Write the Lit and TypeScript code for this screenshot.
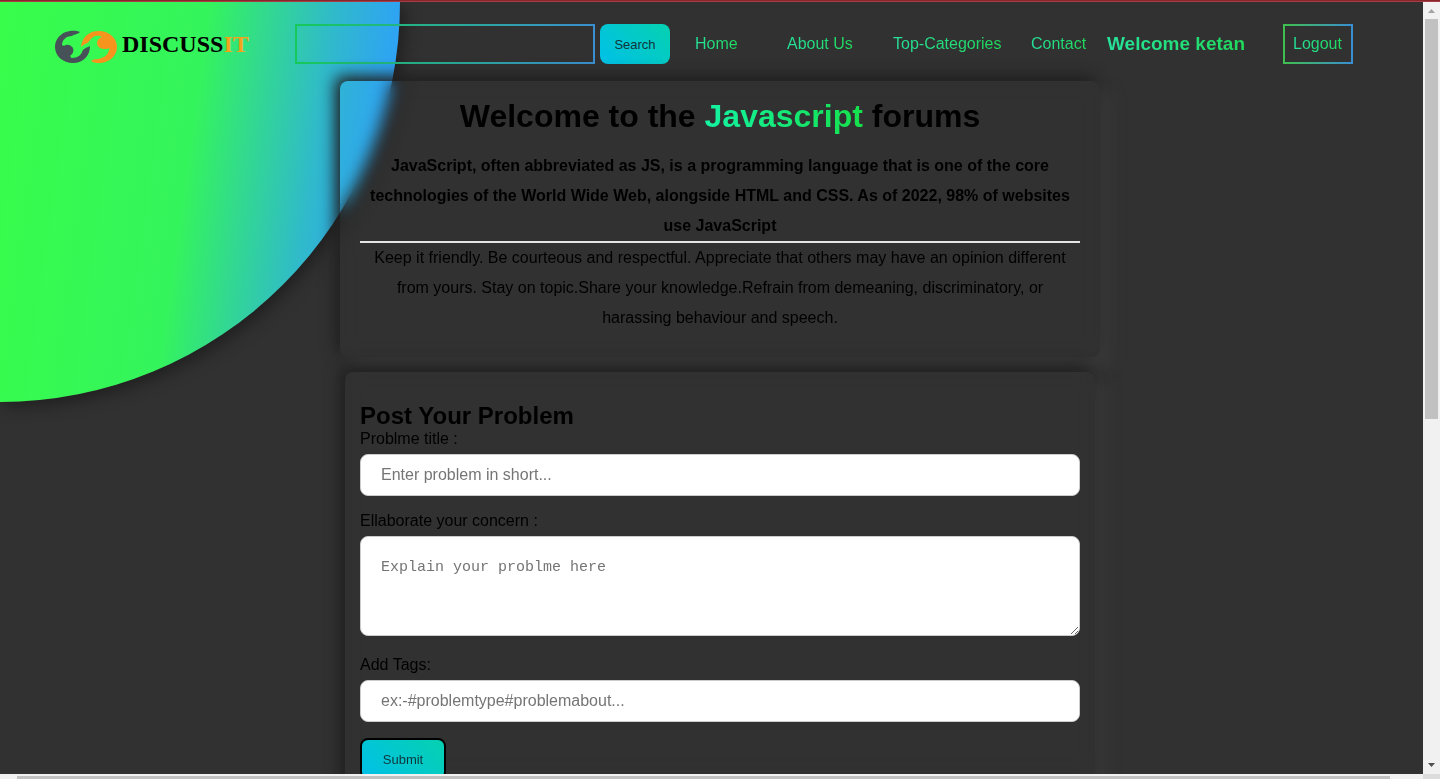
import { LitElement, html, css } from "lit";
import { customElement } from "lit/decorators.js";

@customElement("brand-logo")
export class BrandLogo extends LitElement {
  static styles = css`
    :host { display: block; }
    .brand {
      display: flex;
      align-items: center;
      gap: 5px;
      color: #000;
      text-decoration: none;
    }
    .mark { display: block; width: 62px; height: 40px; flex: none; }
    .name {
      font: bold 24px/36px "Liberation Serif", "Times New Roman", serif;
    }
    .accent { color: #f2a51c; }
  `;

  render() {
    return html`
      <a class="brand" href="#">
        <svg class="mark" viewBox="0 0 62 40" aria-hidden="true">
          <path fill="#465158" d="M25 8C22 6.500 18 6.500 15 7C6 8 0 15 0 23C0 32 8 39 18 39C28 39 35 32 35 22C31 24 29 24 27.500 27C26 31 23 34 17 34C16 34 16 33 15 32C18 30 19 27 18 24C16 21 13 20 11 21C9 22 8 22 7 21C7 16 11 12 17 12C18.500 10 22 11 25 8Z"/>
          <path fill="#f7941e" d="M26 23C27 13 34 7 44 7C54 7 62 14 62 23C62 32 54 39 44 39C41 39 38 38.500 36 37C40 34 44 36 46 34C51 33 54 29 54.500 24C53 25 51 25 49 25C45 25 42 22 42 19C42 16 44 14 47 13C42 10 37 13 35 16C33 20 30 19 26 23Z"/>
        </svg>
        <span class="name">DISCUSS<span class="accent">IT</span></span>
      </a>
    `;
  }
}

@customElement("site-nav")
export class SiteNav extends LitElement {
  static styles = css`
    :host { display: block; }
    .bar {
      display: flex;
      align-items: center;
      height: 40px;
      padding: 22px 55px 17px;
    }
    .logo { width: 240px; flex: none; }
    .search { display: flex; gap: 5px; flex: none; margin-right: 25px; }
    .box {
      box-sizing: border-box;
      width: 300px;
      height: 40px;
      padding: 0 10px;
      color: #1be07a;
      font: 16px "Liberation Sans", Arial, sans-serif;
      background: transparent;
      border: 2px solid;
      border-image: linear-gradient(to right, #16c95a, #3a8fd0) 1;
      outline: none;
    }
    .go {
      width: 70px;
      height: 40px;
      padding: 0;
      color: #10343a;
      font: 13px "Liberation Sans", Arial, sans-serif;
      background: linear-gradient(45deg, #00c0e8, #06d1b0);
      border: 0;
      border-radius: 8px;
    }
    .links {
      display: grid;
      grid-template-columns: 92px 106px 138px 76px 176px 70px;
      align-items: center;
      margin: 0;
      padding: 0;
      list-style: none;
    }
    .link {
      color: transparent;
      font-size: 16px;
      line-height: 20px;
      white-space: nowrap;
      text-decoration: none;
      background: linear-gradient(to right, #26e39b, #20d95c);
      -webkit-background-clip: text;
      background-clip: text;
    }
    .hello {
      font-size: 19px;
      font-weight: bold;
    }
    .frame {
      box-sizing: border-box;
      height: 40px;
      padding: 8px;
      border: 2px solid;
      border-image: linear-gradient(to right, #3fbf4e, #3a8fd0) 1;
    }
  `;

  render() {
    return html`
      <nav class="bar">
        <brand-logo class="logo"></brand-logo>
        <form class="search" role="search" @submit=${(e: Event) => e.preventDefault()}>
          <input class="box" type="text" aria-label="Search" />
          <button class="go" type="submit">Search</button>
        </form>
        <ul class="links">
          <li><a class="link" href="#">Home</a></li>
          <li><a class="link" href="#">About Us</a></li>
          <li><a class="link" href="#">Top-Categories</a></li>
          <li><a class="link" href="#">Contact</a></li>
          <li><span class="link hello">Welcome ketan</span></li>
          <li class="frame"><a class="link" href="#">Logout</a></li>
        </ul>
      </nav>
    `;
  }
}

@customElement("forum-intro")
export class ForumIntro extends LitElement {
  static styles = css`
    :host { display: block; text-align: center; }
    .title { margin: 0 0 16px; font-size: 32px; line-height: 38px; }
    .topic {
      color: transparent;
      background: linear-gradient(to right, #14f3a2, #16e04c);
      -webkit-background-clip: text;
      background-clip: text;
    }
    .lead, .rules { margin: 0; font-size: 16px; line-height: 30px; }
    .lead { font-weight: bold; }
    .rule { height: 2px; margin: 0; border: 0; background: #e6e6e6; }
  `;

  render() {
    return html`
      <h1 class="title">Welcome to the <span class="topic">Javascript</span> forums</h1>
      <p class="lead">
        JavaScript, often abbreviated as JS, is a programming language that is one of the core
        technologies of the World Wide Web, alongside HTML and CSS. As of 2022, 98% of websites use
        JavaScript
      </p>
      <hr class="rule" />
      <p class="rules">
        Keep it friendly. Be courteous and respectful. Appreciate that others may have an opinion
        different from yours. Stay on topic.Share your knowledge.Refrain from demeaning,
        discriminatory, or harassing behaviour and speech.
      </p>
    `;
  }
}

@customElement("problem-form")
export class ProblemForm extends LitElement {
  static styles = css`
    :host { display: block; }
    .heading { margin: 0; font-size: 24px; line-height: 28px; }
    .label { display: block; font-size: 16px; line-height: 18px; }
    .field {
      display: block;
      box-sizing: border-box;
      width: 100%;
      height: 42px;
      margin: 6px 0 16px;
      padding: 12px 20px;
      color: #222;
      font: 16px/18px "Liberation Sans", Arial, sans-serif;
      background: #fff;
      border: 1px solid #ccc;
      border-radius: 8px;
    }
    .field::placeholder { color: #757575; }
    .area {
      height: 100px;
      margin-bottom: 20px;
      padding: 20px;
      font: 15px/22px "Liberation Mono", Consolas, monospace;
    }
    .submit {
      width: 86px;
      height: 42px;
      padding: 0;
      color: #10343a;
      font: 13px "Liberation Sans", Arial, sans-serif;
      background: linear-gradient(45deg, #00c0e8, #06d1b0);
      border: 2px solid #000;
      border-radius: 8px;
    }
  `;

  render() {
    return html`
      <form @submit=${(e: Event) => e.preventDefault()}>
        <h2 class="heading">Post Your Problem</h2>
        <label class="label" for="title">Problme title :</label>
        <input class="field" id="title" type="text" placeholder="Enter problem in short..." />
        <label class="label" for="concern">Ellaborate your concern :</label>
        <textarea class="field area" id="concern" placeholder="Explain your problme here"></textarea>
        <label class="label" for="tags">Add Tags:</label>
        <input class="field" id="tags" type="text" placeholder="ex:-#problemtype#problemabout..." />
        <button class="submit" type="submit">Submit</button>
      </form>
    `;
  }
}

@customElement("app-root")
export class AppRoot extends LitElement {
  static styles = css`
    :host {
      display: grid;
      grid-template: 2px minmax(0, 1fr) 5px / minmax(0, 1fr) 17px;
      height: 100vh;
      overflow: hidden;
      color: #000;
      font-family: "Liberation Sans", Arial, sans-serif;
      background: #313131;
    }
    .edge {
      grid-column: 1 / -1;
      background: linear-gradient(#86272e 50%, #a83c43 50%);
    }
    .view { position: relative; overflow: hidden; }
    .page { width: 100vw; position: relative; }
    .disc {
      position: absolute;
      top: 0;
      left: 0;
      width: 400px;
      height: 400px;
      border-radius: 0 0 100% 0;
      background: linear-gradient(98deg, #38fd4a, #34f45c 46%, #30b9cc 74%, #2e9dff 92%);
      box-shadow: 5px 5px 15px #202020;
    }
    .content {
      display: flex;
      flex-direction: column;
      align-items: center;
      gap: 15px;
    }
    .card {
      box-sizing: border-box;
      width: 100%;
      border-radius: 8px;
      backdrop-filter: blur(8px);
      box-shadow: -5px -5px 15px #202020, 10px 10px 15px #3a3a3a;
    }
    .intro { max-width: 760px; padding: 16px 20px 24px; }
    .post { max-width: 750px; padding: 30px 15px 40px; }
    .vbar {
      display: flex;
      flex-direction: column;
      justify-content: space-between;
      align-items: center;
      background: #f1f1f1;
    }
    .arrow { display: block; width: 17px; height: 17px; flex: none; }
    .vthumb { width: 13px; height: 400px; background: #c1c1c1; }
    .fill { flex: 1; }
    .hbar { padding: 2px 33px 0 17px; background: #f1f1f1; }
    .hthumb { height: 3px; background: #c1c1c1; }
    .corner { background: #dcdcdc; }
  `;

  render() {
    return html`
      <div class="edge"></div>
      <div class="view">
        <div class="disc"></div>
        <div class="page">
          <site-nav></site-nav>
          <main class="content">
            <forum-intro class="card intro"></forum-intro>
            <problem-form class="card post"></problem-form>
          </main>
        </div>
      </div>
      <div class="vbar" aria-hidden="true">
        <svg class="arrow" viewBox="0 0 17 17"><path fill="#a3a3a3" d="M5 11h7L8.500 7z"/></svg>
        <div class="vthumb"></div>
        <div class="fill"></div>
        <svg class="arrow" viewBox="0 0 17 17"><path fill="#505050" d="M5 6h7L8.500 10z"/></svg>
      </div>
      <div class="hbar" aria-hidden="true"><div class="hthumb"></div></div>
      <div class="corner"></div>
    `;
  }
}
